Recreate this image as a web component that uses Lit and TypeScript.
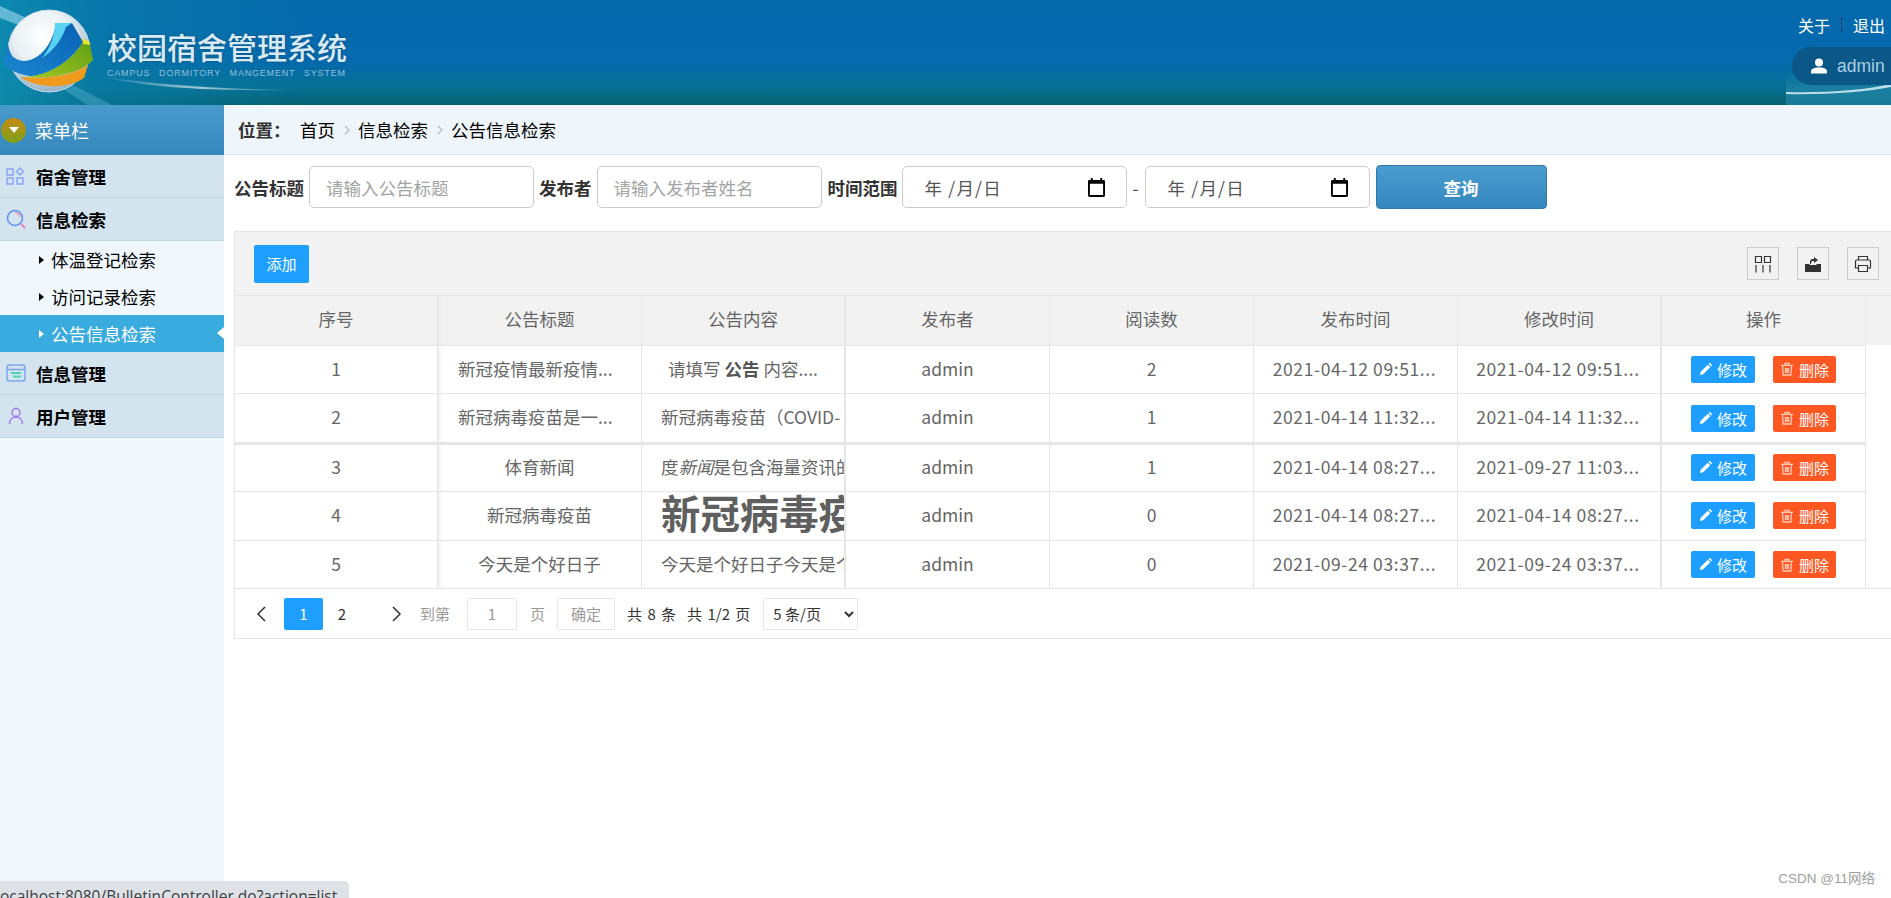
import {LitElement, html, css, svg} from 'lit';
import {customElement} from 'lit/decorators.js';

const rows = [
    {id: 1, title: '新冠疫情最新疫情...', titleCls: 'clip', body: html`请填写 <b>公告</b> 内容....`, cls: 'center', reads: 2, created: '2021-04-12 09:51...', updated: '2021-04-12 09:51...'},
    {id: 2, title: '新冠病毒疫苗是一...', titleCls: 'clip', body: html`新冠病毒疫苗（COVID-`, cls: '', reads: 1, created: '2021-04-14 11:32...', updated: '2021-04-14 11:32...'},
    {id: 3, title: '体育新闻', titleCls: '', body: html`度<i>新闻</i>是包含海量资讯的`, cls: '', reads: 1, created: '2021-04-14 08:27...', updated: '2021-09-27 11:03...'},
    {id: 4, title: '新冠病毒疫苗', titleCls: '', body: html`<span class="huge">新冠病毒疫</span>`, cls: '', reads: 0, created: '2021-04-14 08:27...', updated: '2021-04-14 08:27...'},
    {id: 5, title: '今天是个好日子', titleCls: '', body: html`今天是个好日子今天是个`, cls: '', reads: 0, created: '2021-09-24 03:37...', updated: '2021-09-24 03:37...'},
];

const heads = ['序号', '公告标题', '公告内容', '发布者', '阅读数', '发布时间', '修改时间', '操作'];

const calendar = html`<svg class="cal" viewBox="0 0 18 20" width="17" height="19"><path d="M3 0h2v2h8V0h2v2h1.500A1.500 1.500 0 0 1 18 3.500V18.500A1.500 1.500 0 0 1 16.500 20h-15A1.500 1.500 0 0 1 0 18.500V3.500A1.500 1.500 0 0 1 1.500 2H3zM2 6v12h14V6z" fill="#000"/></svg>`;

const pencil = html`<svg viewBox="0 0 14 14" width="13" height="13"><path d="M1 13l.8-3.500L9.500 1.800l2.700 2.700-7.700 7.700zM10.300 1l.7-.6a1 1 0 0 1 1.300 0l1.300 1.300a1 1 0 0 1 0 1.300l-.6.700z" fill="#fff"/></svg>`;

const trash = html`<svg viewBox="0 0 14 14" width="14" height="14" fill="none" stroke="#ffc9b5" stroke-width="1.300"><path d="M1 3.300h12M5 3V1.500h4V3M2.500 3.500l.6 9.500h7.800l.6-9.500M5.500 6v5M7 6v5M8.500 6v5"/></svg>`;

@customElement('app-root')
export class AppRoot extends LitElement {
    static styles = css`
        :host {
            display: block;
            position: relative;
            width: 1891px;
            height: 898px;
            overflow: hidden;
            background: #fff;
            font-family: "Noto Sans CJK SC", "Noto Sans", sans-serif;
            font-size: 17.5px;
            color: #666;
        }
        .top {
            position: relative;
            height: 105px;
            display: flex;
            justify-content: space-between;
            overflow: hidden;
            background: linear-gradient(to bottom, #0569ac 0, #056aae 58%, #066f92 84%, #07606f 100%);
        }
        .swoosh {
            position: absolute;
            left: 0;
            top: 0;
        }
        .brand {
            position: relative;
            padding: 32px 0 0 107px;
        }
        .brand-name {
            font-size: 30px;
            line-height: 28px;
            font-weight: 500;
            color: #d8ebf5;
            text-shadow: 0 0 3px #0c4f80;
            white-space: nowrap;
        }
        .brand-en {
            margin-top: 8px;
            font-family: "Liberation Sans", sans-serif;
            font-size: 9px;
            line-height: 11px;
            letter-spacing: 0.8px;
            word-spacing: 5.5px;
            color: #8fc0d8;
            white-space: nowrap;
        }
        .user-side {
            position: relative;
            width: 105px;
            background: linear-gradient(to bottom, rgba(26, 127, 160, 0) 70%, #1a7fa0 84%, #1a7a96 100%);
        }
        .streak {
            position: absolute;
            left: 0;
            top: 84px;
        }
        .links {
            display: flex;
            align-items: center;
            padding: 14px 0 0 12px;
            height: 22px;
            color: #fff;
            font-size: 16px;
            line-height: 22px;
        }
        .links i {
            width: 1px;
            height: 14px;
            margin: 0 10.5px;
            border-left: 1px dotted #223;
        }
        .pill {
            position: absolute;
            left: 6px;
            top: 47px;
            width: 130px;
            height: 38px;
            border-radius: 19px;
            background: #0b5787;
            color: #a9d0e3;
            font-family: "Liberation Sans", sans-serif;
            font-size: 17.500px;
            line-height: 36px;
            display: flex;
            align-items: center;
            gap: 10px;
            padding-left: 19px;
            box-sizing: border-box;
        }
        .main {
            display: flex;
            height: 776px;
        }
        .side {
            width: 224px;
            flex: none;
            background: #f0f8fe;
            color: #000;
        }
        .side-head {
            height: 50px;
            display: flex;
            align-items: center;
            gap: 9px;
            padding-left: 1px;
            color: #fff;
            font-size: 18px;
            background: linear-gradient(to bottom, #4a9bcc, #3587bd);
        }
        .dot {
            width: 25px;
            height: 25px;
            border-radius: 50%;
            background: linear-gradient(to bottom, #c48a12, #7da01a);
            display: flex;
            align-items: center;
            justify-content: center;
        }
        .dot::after {
            content: '';
            border: 5px solid transparent;
            border-top: 6px solid #fff;
            border-bottom: 0;
        }
        .menu {
            height: 42px;
            display: grid;
            grid-template-columns: 30px 1fr;
            align-items: center;
            padding-left: 6px;
            background: #d3e4ef;
            border-bottom: 1px solid #c3d5e0;
            font-weight: 700;
        }
        .sub {
            height: 37px;
            display: flex;
            align-items: center;
            gap: 7px;
            padding-left: 39px;
            position: relative;
        }
        .sub::before {
            content: '';
            border: 4px solid transparent;
            border-left: 5px solid #000;
            border-right: 0;
        }
        .sub.on {
            background: #3aabde;
            color: #fff;
        }
        .sub.on::before {
            border-left-color: #fff;
        }
        .sub.on::after {
            content: '';
            position: absolute;
            right: 0;
            top: 12px;
            border: 6px solid transparent;
            border-right: 7px solid #fff;
            border-left: 0;
        }
        .content {
            flex: 1;
            min-width: 0;
        }
        .crumb {
            height: 49px;
            display: flex;
            align-items: center;
            padding-left: 14px;
            background: #eef5fb;
            border-bottom: 1px solid #dbe7ef;
            color: #000;
        }
        .crumb b {
            color: #333;
            width: 62px;
        }
        .crumb svg {
            margin: 0 7.500px;
        }
        .search {
            display: flex;
            align-items: center;
            height: 44px;
            margin-top: 10px;
            padding-left: 10px;
        }
        .search label {
            font-weight: 700;
            color: #333;
            white-space: nowrap;
        }
        .field {
            box-sizing: border-box;
            width: 225px;
            height: 42px;
            margin: 0 5px 0 5px;
            border: 1px solid #ccc;
            border-radius: 5px;
            background: #fff;
            font: inherit;
            padding: 0 16px;
            outline: none;
        }
        .field.last {
            margin-right: 6px;
        }
        .field::placeholder {
            color: #a3a3a3;
        }
        .date {
            display: flex;
            align-items: center;
            justify-content: space-between;
            color: #555;
            letter-spacing: 1.200px;
            padding: 0 21px 0 22px;
            margin: 0;
        }
        .date.first {
            margin-left: 4px;
        }
        .dash {
            width: 18px;
            text-align: center;
            color: #444;
        }
        .query {
            width: 171px;
            height: 44px;
            margin-left: 6px;
            border: 1px solid #2f78aa;
            border-radius: 4px;
            color: #fff;
            font: inherit;
            font-weight: 700;
            background: linear-gradient(to bottom, #4a9ccf, #3488bf);
        }
        .panel {
            width: 1680px;
            margin: 22px 0 0 10px;
            border: 1px solid #e6e6e6;
            border-right: 0;
            box-sizing: border-box;
        }
        .tools {
            height: 63px;
            display: flex;
            align-items: center;
            justify-content: space-between;
            padding: 0 35px 0 19px;
            background: #f2f2f2;
            box-sizing: border-box;
        }
        .add {
            width: 55px;
            height: 38px;
            border: 0;
            border-radius: 2px;
            background: #1e9fff;
            color: #fff;
            font: inherit;
            font-size: 15px;
            padding: 0;
        }
        .tool-icons {
            display: flex;
            gap: 18px;
        }
        .tool {
            width: 32px;
            height: 33px;
            box-sizing: border-box;
            border: 1px solid #ccc;
            display: flex;
            align-items: center;
            justify-content: center;
        }
        .grid-row {
            display: grid;
            grid-template-columns: 203px repeat(7, 204px);
        }
        .cell {
            box-sizing: border-box;
            height: 48.800px;
            line-height: 46px;
            padding: 0 19px;
            text-align: center;
            white-space: nowrap;
            overflow: hidden;
            border-right: 1px solid #e6e6e6;
            border-top: 1px solid #e6e6e6;
        }
        .cell.clip {
            text-align: left;
            padding: 0 0 0 20px;
        }
        .stamp {
            padding: 0 2px 0 0;
            letter-spacing: 0.600px;
        }
        .head {
            background: #f2f2f2;
            border-top: 1px solid #e6e6e6;
        }
        .head .cell {
            height: 48.500px;
            line-height: 46px;
            border-top: 0;
        }
        .fixed {
            box-shadow: inset 4px 0 4px -3px #e6e6e6;
        }
        .thick-r {
            border-right-width: 2px;
        }
        .body-cell {
            padding: 0 0 0 19px;
            text-align: left;
        }
        .body-cell.center {
            text-align: center;
            padding: 0;
        }
        .body-cell b {
            color: #555;
        }
        .huge {
            font-size: 39.400px;
            font-weight: 700;
            color: #5f5f5f;
            vertical-align: -3px;
            line-height: 40px;
        }
        .third .cell {
            border-top-width: 3px;
            line-height: 43px;
        }
        .ops {
            display: flex;
            align-items: center;
            justify-content: center;
            gap: 18px;
            padding: 0;
        }
        .op {
            height: 27px;
            display: flex;
            align-items: center;
            justify-content: center;
            gap: 5px;
            border-radius: 2px;
            color: #fff;
            font-size: 15px;
            line-height: 27px;
        }
        .edit {
            width: 64px;
            background: #1e9fff;
        }
        .del {
            width: 63px;
            background: #ff5722;
        }
        .pager {
            height: 49px;
            display: flex;
            align-items: center;
            border-top: 1px solid #e6e6e6;
            font-size: 15px;
            color: #333;
            padding-left: 6px;
        }
        .arrow {
            width: 40px;
            display: flex;
            justify-content: center;
        }
        .arrow.next {
            margin-left: 16px;
        }
        .page {
            width: 38px;
            height: 32px;
            line-height: 32px;
            text-align: center;
        }
        .page.on {
            width: 39px;
            margin-left: 3px;
            border-radius: 2px;
            background: #1e9fff;
            color: #fff;
        }
        .goto {
            margin-left: 3px;
            color: #999;
        }
        .page-word {
            margin-left: 13px;
            color: #999;
        }
        .box {
            box-sizing: border-box;
            height: 32px;
            line-height: 30px;
            border: 1px solid #e6e6e6;
            border-radius: 2px;
            text-align: center;
            color: #999;
            background: #fff;
        }
        .box.num {
            width: 50px;
            margin-left: 17px;
        }
        .box.ok {
            width: 58px;
            margin-left: 12px;
        }
        .count {
            margin-left: 12px;
            word-spacing: 2px;
        }
        .count + .count {
            margin-left: 11px;
        }
        .pager select {
            width: 95px;
            height: 32px;
            margin-left: 13px;
            border: 1px solid #e6e6e6;
            border-radius: 2px;
            background: #fff;
            font: inherit;
            color: #333;
            padding-left: 5px;
            outline: none;
        }
        .status {
            position: absolute;
            left: 0;
            top: 881px;
            width: 349px;
            height: 24px;
            border-top-right-radius: 5px;
            background: #dee1e6;
            color: #3c4043;
            font-family: "Open Sans", sans-serif;
            font-size: 15.500px;
            line-height: 30px;
            white-space: nowrap;
            overflow: hidden;
            text-indent: -4px;
        }
        .mark {
            position: absolute;
            right: 16px;
            top: 870px;
            font-size: 13.500px;
            line-height: 18px;
            color: #a0a0a0;
            font-family: "Liberation Sans", "Noto Sans CJK SC", sans-serif;
        }
    `;

    renderLogo() {
        return svg`
            <defs>
                <radialGradient id="globe" cx="0.42" cy="0.32" r="0.7">
                    <stop offset="0" stop-color="#ffffff"/>
                    <stop offset="0.5" stop-color="#e9f0f4"/>
                    <stop offset="1" stop-color="#8fb0c6"/>
                </radialGradient>
                <linearGradient id="glow" x1="0" y1="0" x2="1" y2="0">
                    <stop offset="0" stop-color="#ffffff" stop-opacity="0"/>
                    <stop offset="0.5" stop-color="#ffffff" stop-opacity="0.6"/>
                    <stop offset="1" stop-color="#ffffff" stop-opacity="0"/>
                </linearGradient>
                <linearGradient id="tint" x1="0" y1="0" x2="1" y2="0">
                    <stop offset="0" stop-color="#0f8fb0" stop-opacity="0.85"/>
                    <stop offset="0.22" stop-color="#0a7fa8" stop-opacity="0.55"/>
                    <stop offset="0.6" stop-color="#0a7fa8" stop-opacity="0"/>
                </linearGradient>
                <linearGradient id="blue" x1="0" y1="1" x2="1" y2="0">
                    <stop offset="0" stop-color="#1a86d0"/>
                    <stop offset="1" stop-color="#0a62b4"/>
                </linearGradient>
                <linearGradient id="green" x1="0" y1="1" x2="1" y2="0">
                    <stop offset="0" stop-color="#a5c91e"/>
                    <stop offset="1" stop-color="#5f9e16"/>
                </linearGradient>
            </defs>
            <rect width="520" height="105" fill="url(#tint)"/>
            <path d="M0 6L40 24L32 30L0 18Z" fill="#a8e0f2" opacity="0.55"/>
            <path d="M67 82L112 105H88L55 84Z" fill="#7cc8e0" opacity="0.3"/>
            <path d="M100 76C150 84 210 89 300 90C220 91 150 89 100 76Z" fill="url(#glow)"/>
            <circle cx="49" cy="51" r="41" fill="url(#globe)" stroke="#c9dce8" stroke-width="1"/>
            <path d="M20 77C50 80 76 74 88 65L84 78C70 88 40 90 20 77Z" fill="#f09a1c"/>
            <path d="M83 42L90 44L93 60C84 70 60 80 22 77C50 76 72 60 83 42Z" fill="url(#green)"/>
            <path d="M80 38L89 41L90 45L83 44Z" fill="#e3e22f"/>
            <path d="M8 44C10 56 14 60 24 61C40 60 52 45 56 24L72 23L83 42C72 60 50 75 30 76C15 74 2 66 4 60C4 54 6 48 8 44Z" fill="url(#blue)"/>
            <path d="M55 23L72 23L66 27C62 40 52 52 42 58C50 48 55 36 55 23Z" fill="#5ad2f2"/>
        `;
    }

    renderTools() {
        return html`
            <div class="tool-icons">
                <div class="tool">
                    <svg viewBox="0 0 18 18" width="18" height="18" fill="none" stroke="#333" stroke-width="1.200"><path d="M1.500 1.500h6v6h-6zM10.500 1.500h6v6h-6zM2 10v7.500M9 10v7.500M16 10v7.500"/></svg>
                </div>
                <div class="tool">
                    <svg viewBox="0 0 18 18" width="18" height="18"><path d="M1 9h4l1 1h6l1-1h4v8H1z" fill="#333"/><path d="M6 9V7C6 4.500 7.500 4 10 4V2l4 3-4 3V6C8 6 7 6.500 7 9z" fill="#333"/></svg>
                </div>
                <div class="tool">
                    <svg viewBox="0 0 18 18" width="18" height="18" fill="none" stroke="#333" stroke-width="1.200"><path d="M4.500 5V1.500h9V5M4.500 13H1.500V6.500a1.500 1.500 0 0 1 1.500-1.500h12a1.500 1.500 0 0 1 1.500 1.500V13h-3M4.500 10.500h9v6h-9z"/></svg>
                </div>
            </div>
        `;
    }

    render() {
        const chevron = html`<svg viewBox="0 0 8 12" width="8" height="12" fill="none" stroke="#b9c4cc" stroke-width="1.500"><path d="M2 2l4 4-4 4"/></svg>`;
        return html`
            <div class="top">
                <svg class="swoosh" width="520" height="105">${this.renderLogo()}</svg>
                <div class="brand">
                    <div class="brand-name">校园宿舍管理系统</div>
                    <div class="brand-en">CAMPUS DORMITORY MANGEMENT SYSTEM</div>
                </div>
                <div class="user-side">
                    <svg class="streak" width="105" height="12" viewBox="0 0 105 12"><path d="M0 8C40 9 80 6 105 0V3C80 8 40 11 0 10Z" fill="#d6f0fa" opacity="0.85"/></svg>
                    <div class="links"><span>关于</span><i></i><span>退出</span></div>
                    <div class="pill">
                        <svg viewBox="0 0 16 16" width="16" height="16"><circle cx="8" cy="4.500" r="4" fill="#fff"/><path d="M0 15.500V13c0-2 3-3 5.500-3.500h5C13 10 16 11 16 13v2.500z" fill="#fff"/></svg>
                        admin
                    </div>
                </div>
            </div>
            <div class="main">
                <div class="side">
                    <div class="side-head"><span class="dot"></span>菜单栏</div>
                    <div class="menu">
                        <svg viewBox="0 0 18 18" width="18" height="18" fill="none" stroke="#8aa5f5" stroke-width="1.500"><path d="M1 2h6v6H1zM1 11h6v6H1zM11 11h6v6h-6zM14 1l3.500 3.500L14 8l-3.500-3.500z"/></svg>
                        <span>宿舍管理</span>
                    </div>
                    <div class="menu">
                        <svg viewBox="0 0 20 20" width="20" height="20" fill="none" stroke-width="1.500"><circle cx="9" cy="9" r="7.500" stroke="#5b8ff5"/><path d="M9 3.500A5.500 5.500 0 0 1 14 8" stroke="#ef8fb0"/><path d="M15 15l4 4" stroke="#ef7fb0" stroke-width="2"/></svg>
                        <span>信息检索</span>
                    </div>
                    <div class="sub">体温登记检索</div>
                    <div class="sub">访问记录检索</div>
                    <div class="sub on">公告信息检索</div>
                    <div class="menu">
                        <svg viewBox="0 0 20 18" width="20" height="18" fill="none"><rect x="1" y="1" width="18" height="16" rx="2.500" stroke="#7ea6ee" stroke-width="1.500"/><path d="M1 5.500h18" stroke="#7ea6ee" stroke-width="1.500"/><path d="M5 9h10M7 12.500h8" stroke="#4fd0b8" stroke-width="2"/></svg>
                        <span>信息管理</span>
                    </div>
                    <div class="menu">
                        <svg viewBox="0 0 20 18" width="20" height="18" fill="none" stroke="#a07cf0" stroke-width="1.500"><circle cx="10" cy="5.500" r="4"/><path d="M3.500 17c0-4 2.500-7 6.500-7s6.500 3 6.500 7"/></svg>
                        <span>用户管理</span>
                    </div>
                </div>
                <div class="content">
                    <div class="crumb">
                        <b>位置：</b><span>首页</span>${chevron}<span>信息检索</span>${chevron}<span>公告信息检索</span>
                    </div>
                    <div class="search">
                        <label>公告标题</label>
                        <input class="field" placeholder="请输入公告标题" />
                        <label>发布者</label>
                        <input class="field last" placeholder="请输入发布者姓名" />
                        <label>时间范围</label>
                        <div class="field date first">年 /月/日${calendar}</div>
                        <span class="dash">-</span>
                        <div class="field date">年 /月/日${calendar}</div>
                        <button class="query">查询</button>
                    </div>
                    <div class="panel">
                        <div class="tools">
                            <button class="add">添加</button>
                            ${this.renderTools()}
                        </div>
                        <div class="grid-row head">
                            ${heads.map((h, i) => html`<div class="cell ${i === 1 ? 'fixed' : ''} ${i === 2 || i === 6 ? 'thick-r' : ''}">${h}</div>`)}
                        </div>
                        ${rows.map(r => html`
                            <div class="grid-row ${r.id === 3 ? 'third' : ''}">
                                <div class="cell">${r.id}</div>
                                <div class="cell fixed ${r.titleCls}">${r.title}</div>
                                <div class="cell body-cell thick-r ${r.cls}">${r.body}</div>
                                <div class="cell">admin</div>
                                <div class="cell">${r.reads}</div>
                                <div class="cell stamp">${r.created}</div>
                                <div class="cell stamp thick-r">${r.updated}</div>
                                <div class="cell ops">
                                    <span class="op edit">${pencil}修改</span>
                                    <span class="op del">${trash}删除</span>
                                </div>
                            </div>
                        `)}
                        <div class="pager">
                            <span class="arrow"><svg viewBox="0 0 10 16" width="10" height="16" fill="none" stroke="#333" stroke-width="1.500"><path d="M9 1L2 8l7 7"/></svg></span>
                            <span class="page on">1</span>
                            <span class="page">2</span>
                            <span class="arrow next"><svg viewBox="0 0 10 16" width="10" height="16" fill="none" stroke="#333" stroke-width="1.500"><path d="M1 1l7 7-7 7"/></svg></span>
                            <span class="goto">到第</span>
                            <span class="box num">1</span>
                            <span class="page-word">页</span>
                            <span class="box ok">确定</span>
                            <span class="count">共 8 条</span>
                            <span class="count">共 1/2 页</span>
                            <select><option>5 条/页</option><option>10 条/页</option></select>
                        </div>
                    </div>
                </div>
            </div>
            <div class="status">localhost:8080/BulletinController.do?action=list</div>
            <div class="mark">CSDN @11网络</div>
        `;
    }
}
